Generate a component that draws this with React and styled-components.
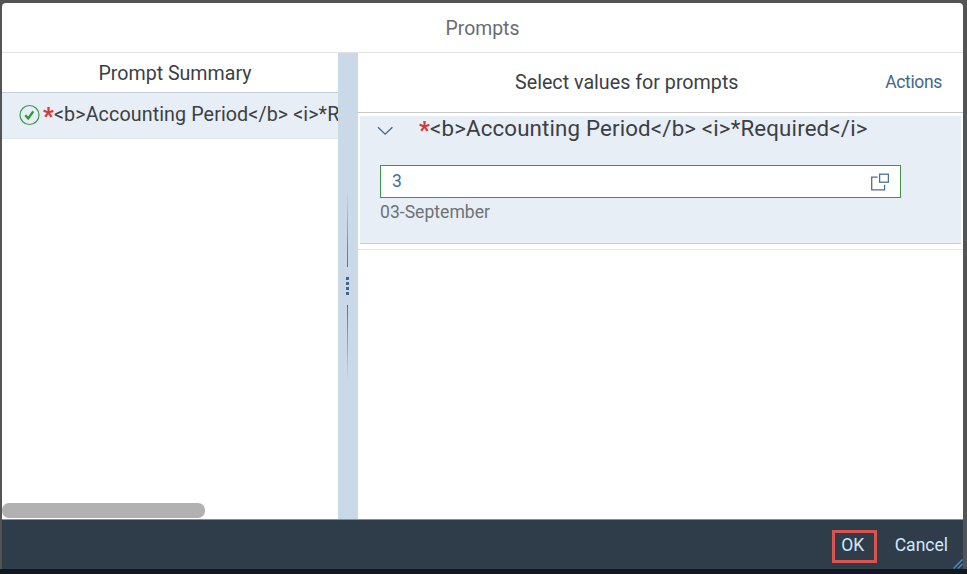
import React from 'react'
import styled, { createGlobalStyle } from 'styled-components'

const PROMPT_NAME = '<b>Accounting Period</b> <i>*Required</i>'

function App() {
  return (
    <>
      <GlobalStyle />
      <Backdrop>
        <Dialog>
          <DialogHeader>
            <DialogTitle>Prompts</DialogTitle>
          </DialogHeader>
          <Body>
            <SummaryPane>
              <SummaryHeader>Prompt Summary</SummaryHeader>
              <SummaryItem>
                <CheckIcon />
                <Required $lineHeight="48px">*</Required>
                <SummaryText>{PROMPT_NAME}</SummaryText>
              </SummaryItem>
              <ScrollThumb />
            </SummaryPane>
            <Splitter>
              <SplitterLine $to="top" />
              <Grip>
                <i />
                <i />
                <i />
                <i />
              </Grip>
              <SplitterLine $to="bottom" />
            </Splitter>
            <ValuesPane>
              <ValuesHeader>
                <ValuesTitle>Select values for prompts</ValuesTitle>
                <ActionsLink>Actions</ActionsLink>
              </ValuesHeader>
              <PromptPanel>
                <PromptRow>
                  <ChevronIcon />
                  <Required $lineHeight="30px">*</Required>
                  <PromptText>{PROMPT_NAME}</PromptText>
                </PromptRow>
                <Field>
                  <FieldValue>3</FieldValue>
                  <ValueHelpIcon />
                </Field>
                <Description>03-September</Description>
              </PromptPanel>
              <Divider />
            </ValuesPane>
          </Body>
          <Footer>
            <OkButton>OK</OkButton>
            <CancelButton>Cancel</CancelButton>
            <ResizeHandle />
          </Footer>
        </Dialog>
      </Backdrop>
    </>
  )
}

function CheckIcon() {
  return (
    <CheckSvg width="22" height="22" viewBox="0 0 22 22" fill="none">
      <circle cx="10.5" cy="11" r="9.5" stroke="#3f9a4c" strokeWidth="1.2" />
      <path d="M6.3 11.2l2.9 3.3 5.1-7.2" stroke="#2f943b" strokeWidth="2.3" />
    </CheckSvg>
  )
}

function ChevronIcon() {
  return (
    <ChevronSvg width="16" height="10" viewBox="0 0 16 10" fill="none">
      <path d="M1 1.2l7.2 7 7.2-7" stroke="#3c6a94" strokeWidth="1.3" />
    </ChevronSvg>
  )
}

function ValueHelpIcon() {
  return (
    <svg width="18" height="18" viewBox="0 0 18 18" fill="none" stroke="#4b7091" strokeWidth="1.3">
      <rect x="8.6" y="1.2" width="8.8" height="8" />
      <path d="M6.6 4.1H.7v12.7h12.9v-5.1" />
    </svg>
  )
}

function ResizeHandle() {
  return (
    <ResizeSvg width="10" height="10" viewBox="0 0 10 10" stroke="#4c88c7" strokeWidth="1.5">
      <path d="M.5 9.5l9-9M5 9.5l4.5-4.5" />
    </ResizeSvg>
  )
}

const GlobalStyle = createGlobalStyle`
  *{
    box-sizing:border-box;
  }
  body{
    margin:0;
    overflow:hidden;
    font-family:Roboto, "Liberation Sans", sans-serif;
    color:#3c3f43;
  }
`;

const Backdrop = styled.div`
  height:574px;
  padding:3px 4px 0 2px;
  background:linear-gradient(#545454 0 569px, #11171d 569px);
`;

const Dialog = styled.div`
  height:567px;
  display:flex;
  flex-direction:column;
  background:#fff;
  border-radius:4px 4px 0 0;
  overflow:hidden;
`;

const DialogHeader = styled.div`
  height:50px;
  flex:none;
  display:flex;
  justify-content:center;
  border-bottom:1px solid #e2e2e2;
`;

const DialogTitle = styled.div`
  font-size:19.4px;
  line-height:51px;
  color:#6a6d70;
`;

const Body = styled.div`
  flex:1;
  min-height:0;
  display:flex;
`;

const SummaryPane = styled.div`
  width:336px;
  display:flex;
  flex-direction:column;
  overflow:hidden;
`;

const SummaryHeader = styled.div`
  height:40px;
  padding-left:10px;
  border-bottom:1px solid #c3cedb;
  font-size:19.6px;
  line-height:41px;
  text-align:center;
`;

const SummaryItem = styled.div`
  height:46px;
  padding-left:17px;
  display:flex;
  background:#e8eef6;
  border-bottom:1px solid #e0e5ec;
  white-space:nowrap;
`;

const CheckSvg = styled.svg`
  flex:none;
  margin:11px 2px 0 0;
`;

const Required = styled.span`
  width:11px;
  flex:none;
  font-size:23px;
  font-weight:900;
  line-height:${(props) => props.$lineHeight};
  color:#cf3a3a;
`;

const SummaryText = styled.span`
  font-size:19.7px;
  line-height:43px;
  letter-spacing:.1px;
`;

const ScrollThumb = styled.div`
  width:203px;
  height:15px;
  margin:auto 0 1px;
  border-radius:7px;
  background:#b1b1b1;
`;

const Splitter = styled.div`
  width:20px;
  padding-right:1px;
  display:flex;
  flex-direction:column;
  align-items:center;
  justify-content:center;
  background:#c9d9e8;
`;

const SplitterLine = styled.div`
  width:1px;
  height:76px;
  background:linear-gradient(to ${(props) => props.$to}, #47739f, #c9d9e8);
`;

const Grip = styled.div`
  height:38px;
  display:flex;
  flex-direction:column;
  align-items:center;
  justify-content:center;
  gap:2px;

  i{
    width:3px;
    height:3px;
    background:#426788;
  }
`;

const ValuesPane = styled.div`
  flex:1;
  display:flex;
  flex-direction:column;
`;

const ValuesHeader = styled.div`
  height:60px;
  display:flex;
  padding:0 21px 0 157px;
  justify-content:space-between;
  border-bottom:1px solid #cac9c8;
  line-height:59px;
`;

const ValuesTitle = styled.div`
  font-size:19.7px;
`;

const ActionsLink = styled.div`
  font-size:17.5px;
  letter-spacing:-.35px;
  color:#426788;
`;

const PromptPanel = styled.div`
  height:128px;
  margin:3px 2px 0 2px;
  padding-left:20px;
  background:#e8eef6;
  border-bottom:1px solid #c8cdd4;
`;

const PromptRow = styled.div`
  height:49px;
  display:flex;
  margin-left:-3px;
`;

const ChevronSvg = styled.svg`
  flex:none;
  margin:10px 26px 0 0;
`;

const PromptText = styled.span`
  font-size:22.3px;
  line-height:24px;
  letter-spacing:.15px;
`;

const Field = styled.div`
  width:521px;
  height:33px;
  padding:0 11px;
  display:flex;
  align-items:center;
  justify-content:space-between;
  background:#fff;
  border:1px solid #41914a;
`;

const FieldValue = styled.span`
  padding-bottom:2px;
  font-size:17.5px;
  color:#3d70a0;
`;

const Description = styled.div`
  font-size:17.6px;
  line-height:28px;
  color:#6f7275;
`;

const Divider = styled.div`
  height:6px;
  border-bottom:1px solid #e5e5e5;
`;

const Footer = styled.div`
  height:51px;
  flex:none;
  position:relative;
  display:flex;
  align-items:flex-start;
  justify-content:flex-end;
  padding:10px 15px 0 0;
  background:#2f3c49;
  border-top:1px solid #80909a;
  border-bottom:1px solid #11171d;
  font-size:17.5px;
  color:#d3e8fa;
`;

const OkButton = styled.div`
  width:45px;
  height:33px;
  margin-right:18px;
  padding-right:3px;
  border:3px solid #d9534f;
  line-height:25px;
  text-align:center;
`;

const CancelButton = styled.div`
  line-height:31px;
`;

const ResizeSvg = styled.svg`
  position:absolute;
  right:0;
  bottom:0;
`;

export default App
